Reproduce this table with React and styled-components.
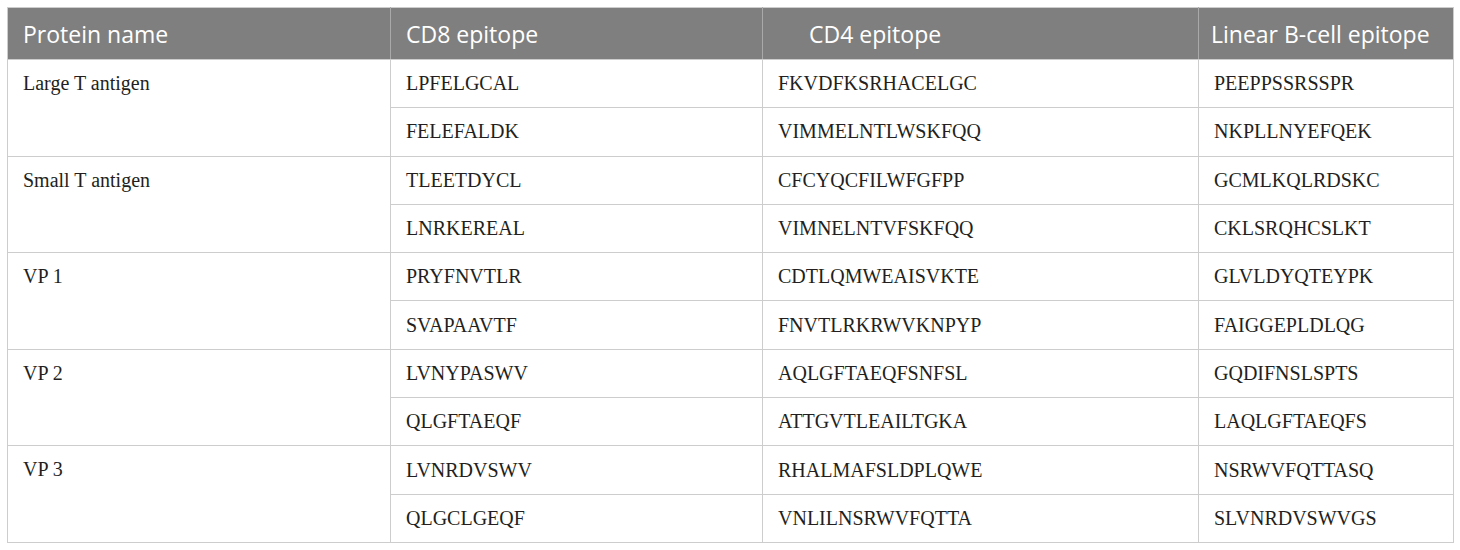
import React from "react";
import styled, { createGlobalStyle } from "styled-components";

const GlobalStyle = createGlobalStyle`
  body {
    margin: 0;
    background: #ffffff;
  }
`;

const Page = styled.div`
  padding: 7px;
  width: 1460px;
  box-sizing: border-box;
`;

const Table = styled.table`
  width: 1446px;
  border-collapse: collapse;
  table-layout: fixed;
  border: 1px solid #cdcdcd;
`;

const HeadRow = styled.tr`
  height: 52px;
  background: #7f7f7f;
`;

const HeadCell = styled.th`
  padding: 0 0 0 ${(props) => props.indent || 14}px;
  text-align: left;
  font-family: "Open Sans", "Noto Sans", sans-serif;
  font-weight: 400;
  font-size: 23px;
  color: #ffffff;
  white-space: nowrap;
  border-left: 1px solid #a9a9a9;
  border-bottom: 1px solid #cdcdcd;

  &:first-child {
    border-left: 1px solid #cdcdcd;
  }
`;

const BodyRow = styled.tr`
  height: 48.3px;
`;

const Cell = styled.td`
  padding: 0 0 0 15px;
  font-family: "Liberation Serif", "Times New Roman", serif;
  font-size: 20px;
  color: #231f20;
  border: 1px solid #cdcdcd;
  vertical-align: middle;
  white-space: nowrap;
`;

const NameCell = styled(Cell)`
  vertical-align: top;
  line-height: 47px;
`;

const proteins = [
  {
    name: "Large T antigen",
    rows: [
      ["LPFELGCAL", "FKVDFKSRHACELGC", "PEEPPSSRSSPR"],
      ["FELEFALDK", "VIMMELNTLWSKFQQ", "NKPLLNYEFQEK"],
    ],
  },
  {
    name: "Small T antigen",
    rows: [
      ["TLEETDYCL", "CFCYQCFILWFGFPP", "GCMLKQLRDSKC"],
      ["LNRKEREAL", "VIMNELNTVFSKFQQ", "CKLSRQHCSLKT"],
    ],
  },
  {
    name: "VP 1",
    rows: [
      ["PRYFNVTLR", "CDTLQMWEAISVKTE", "GLVLDYQTEYPK"],
      ["SVAPAAVTF", "FNVTLRKRWVKNPYP", "FAIGGEPLDLQG"],
    ],
  },
  {
    name: "VP 2",
    rows: [
      ["LVNYPASWV", "AQLGFTAEQFSNFSL", "GQDIFNSLSPTS"],
      ["QLGFTAEQF", "ATTGVTLEAILTGKA", "LAQLGFTAEQFS"],
    ],
  },
  {
    name: "VP 3",
    rows: [
      ["LVNRDVSWV", "RHALMAFSLDPLQWE", "NSRWVFQTTASQ"],
      ["QLGCLGEQF", "VNLILNSRWVFQTTA", "SLVNRDVSWVGS"],
    ],
  },
];

export default function App() {
  return (
    <>
      <GlobalStyle />
      <Page>
        <Table>
          <colgroup>
            <col style={{ width: 383 }} />
            <col style={{ width: 372 }} />
            <col style={{ width: 436 }} />
            <col style={{ width: 255 }} />
          </colgroup>
          <thead>
            <HeadRow>
              <HeadCell indent={15}>Protein name</HeadCell>
              <HeadCell indent={15}>CD8 epitope</HeadCell>
              <HeadCell indent={46}>CD4 epitope</HeadCell>
              <HeadCell indent={12}>Linear B-cell epitope</HeadCell>
            </HeadRow>
          </thead>
          <tbody>
            {proteins.map((protein) =>
              protein.rows.map((row, index) => (
                <BodyRow key={protein.name + index}>
                  {index === 0 && (
                    <NameCell rowSpan={protein.rows.length}>
                      {protein.name}
                    </NameCell>
                  )}
                  {row.map((epitope) => (
                    <Cell key={epitope}>{epitope}</Cell>
                  ))}
                </BodyRow>
              ))
            )}
          </tbody>
        </Table>
      </Page>
    </>
  );
}
